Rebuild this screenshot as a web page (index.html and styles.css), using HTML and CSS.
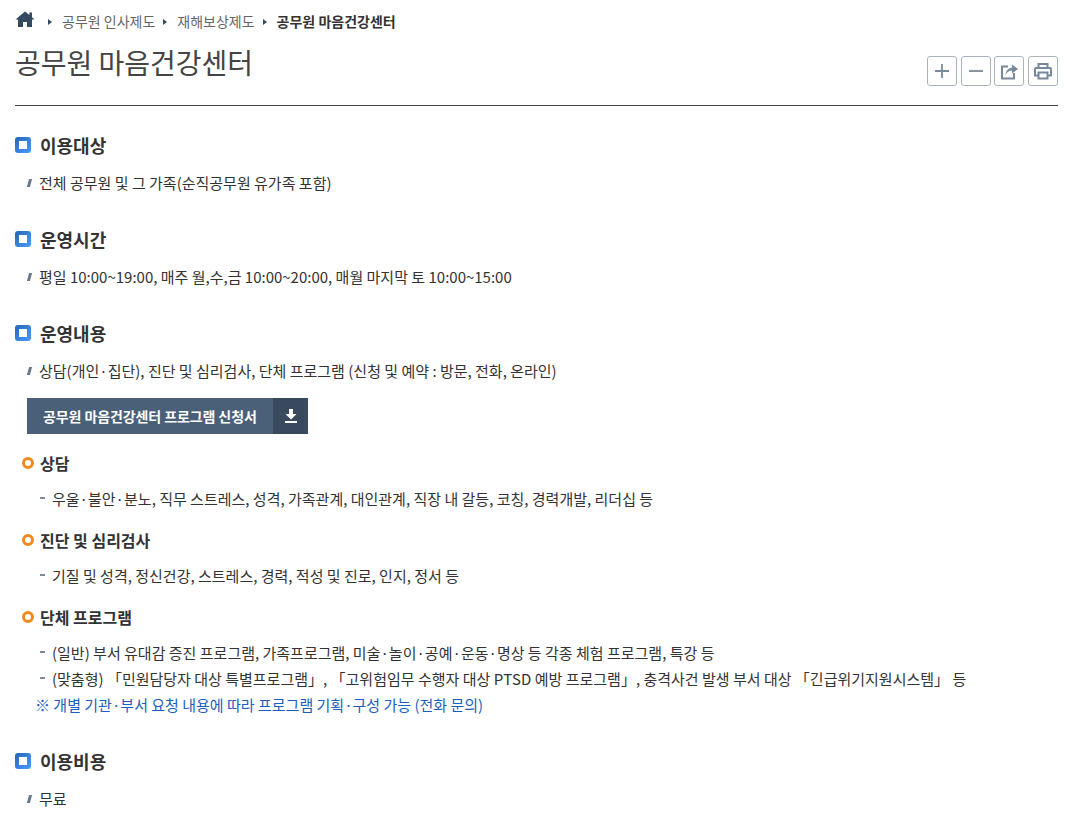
FILE: index.html
```html
<!DOCTYPE html>
<html>
<head>
<meta charset="utf-8">
<title>공무원 마음건강센터</title>
<link rel="stylesheet" href="styles.css">
</head>
<body>
<div class="page">
  <nav class="crumbs">
    <svg class="home" width="20" height="16" viewBox="0 0 20 16"><path d="M10 .5 .5 8.600h2.500V16h5v-5h4v5h5V8.600h2.500L17 6.200V1.600h-2.600v2.400z" fill="#34495e"/></svg>
    <span class="crumb">공무원 인사제도</span>
    <span class="crumb">재해보상제도</span>
    <span class="crumb current">공무원 마음건강센터</span>
  </nav>
  <header class="title-row">
    <h1>공무원 마음건강센터</h1>
    <div class="tools">
      <button class="tool"><svg width="18" height="18" viewBox="0 0 18 18"><path d="M9 2v14M2 9h14" stroke="#76899a" stroke-width="1.800" fill="none"/></svg></button>
      <button class="tool"><svg width="18" height="18" viewBox="0 0 18 18"><path d="M2 9h14" stroke="#76899a" stroke-width="1.800" fill="none"/></svg></button>
      <button class="tool"><svg width="20" height="18" viewBox="0 0 20 18"><path d="M9 4.500H3v12h12V11" stroke="#76899a" stroke-width="2" fill="none"/><path d="M6.500 13C7 8.500 9.500 6 13 5.800V2.500L19 7l-6 4.500V8.500c-3 0-5 1.500-6.500 4.500z" fill="#76899a"/></svg></button>
      <button class="tool"><svg width="20" height="18" viewBox="0 0 20 18"><path d="M5.500 6V2h9v4M5 13.500H2V7a1 1 0 0 1 1-1h14a1 1 0 0 1 1 1v6.500h-3M5.500 10.500h9v6h-9z" stroke="#76899a" stroke-width="2" fill="none"/></svg></button>
    </div>
  </header>

  <section class="sec first">
    <h2>이용대상</h2>
    <p class="item">전체 공무원 및 그 가족(순직공무원 유가족 포함)</p>
  </section>

  <section class="sec">
    <h2>운영시간</h2>
    <p class="item">평일 10:00~19:00, 매주 월,수,금 10:00~20:00, 매월 마지막 토 10:00~15:00</p>
  </section>

  <section class="sec">
    <h2>운영내용</h2>
    <p class="item">상담(개인·집단), 진단 및 심리검사, 단체 프로그램 (신청 및 예약 : 방문, 전화, 온라인)</p>
    <a class="download"><span class="dl-label">공무원 마음건강센터 프로그램 신청서</span><span class="dl-icon"><svg width="12" height="14" viewBox="0 0 12 14"><path d="M4 0h4v5h3.500L6 10.500.5 5H4zM0 12h12v2H0z" fill="#fff"/></svg></span></a>
    <h3>상담</h3>
    <p class="dash">우울·불안·분노, 직무 스트레스, 성격, 가족관계, 대인관계, 직장 내 갈등, 코칭, 경력개발, 리더십 등</p>
    <h3>진단 및 심리검사</h3>
    <p class="dash">기질 및 성격, 정신건강, 스트레스, 경력, 적성 및 진로, 인지, 정서 등</p>
    <h3>단체 프로그램</h3>
    <p class="dash">(일반) 부서 유대감 증진 프로그램, 가족프로그램, 미술·놀이·공예·운동·명상 등 각종 체험 프로그램, 특강 등</p>
    <p class="dash tight">(맞춤형) 「민원담당자 대상 특별프로그램」, 「고위험임무 수행자 대상 PTSD 예방 프로그램」, 충격사건 발생 부서 대상 「긴급위기지원시스템」 등</p>
    <p class="note">※ 개별 기관·부서 요청 내용에 따라 프로그램 기획·구성 가능 (전화 문의)</p>
  </section>

  <section class="sec">
    <h2>이용비용</h2>
    <p class="item">무료</p>
  </section>
</div>
</body>
</html>
```
FILE: styles.css
```css
*, *::before { box-sizing: border-box; }
html, body { margin: 0; padding: 0; background: #fff; overflow: hidden; height: 815px; }
body { font-family: "Noto Sans CJK KR", "Noto Sans", sans-serif; color: #333; font-size: 15px; font-kerning: none; }
.page { padding: 0 8px 0 15px; }
.crumbs { display: flex; align-items: center; height: 22px; margin-top: 10px; font-size: 14px; color: #666; }
.home { margin-right: 5px; margin-top: -4px; }
.crumb { position: relative; padding-left: 22px; }
.crumb::before { content: ""; position: absolute; left: 8px; top: 8px; border-left: 4px solid #34495e; border-top: 3px solid transparent; border-bottom: 3px solid transparent; }
.current { font-weight: 700; color: #333; }
.title-row { display: flex; justify-content: space-between; height: 74px; border-bottom: 1px solid #444; }
h1 { margin: 9px 0 0; font-size: 28px; font-weight: 400; line-height: 42px; color: #444; }
.tools { display: flex; gap: 3.670px; margin-top: 24px; }
.tool { width: 30px; height: 30px; padding: 0; display: flex; align-items: center; justify-content: center; background: #fff; border: 1px solid #a8b4c0; border-radius: 3px; }
.sec { margin-top: 28.500px; }
.sec.first { margin-top: 24px; }
h2 { position: relative; margin: 0; padding-left: 25px; font-size: 18px; font-weight: 700; line-height: 30px; height: 30px; color: #333; }
h2::before { content: ""; position: absolute; left: 0; top: 7px; width: 16px; height: 16px; border: 4px solid transparent; border-radius: 3px; background: linear-gradient(#fff, #fff) padding-box, linear-gradient(135deg, #2565b4, #4a9cff) border-box; }
.item { position: relative; margin: 9.500px 0 0; padding-left: 24px; line-height: 26px; color: #333; }
.item::before { content: ""; position: absolute; left: 13px; top: 9px; width: 3px; height: 8px; background: #66788a; transform: skewX(-15deg); }
.download { display: flex; width: 281px; height: 36px; margin: 14px 0 0 12px; background: #4a5f78; color: #fff; font-size: 14px; font-weight: 700; line-height: 36px; letter-spacing: -0.1px; }
.dl-label { flex: 1; padding-left: 16px; }
.dl-icon { width: 35px; display: flex; align-items: center; justify-content: center; background: #394a5e; }
h3 { position: relative; margin: 15px 0 0; padding-left: 25px; font-size: 16px; font-weight: 700; line-height: 26px; color: #333; }
.download + h3 { margin-top: 16px; }
h3::before { content: ""; position: absolute; left: 7px; top: 7px; width: 12px; height: 12px; border: 3px solid #f08a1d; border-radius: 50%; }
.dash { position: relative; margin: 10px 0 0; padding-left: 37px; line-height: 26px; }
.dash::before { content: ""; position: absolute; left: 25px; top: 11px; width: 5px; height: 2px; background: #7d8a99; }
.dash.tight { margin-top: 0; }
.note { margin: 0; padding-left: 20px; line-height: 26px; color: #1a5fc0; }
```
